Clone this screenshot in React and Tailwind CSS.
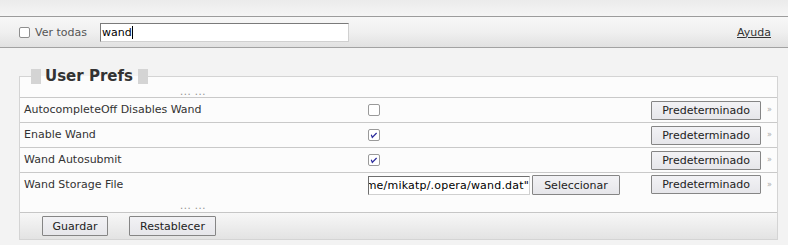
import React from "react";

function Check({ checked }) {
  return (
    <svg width="12" height="12" viewBox="0 0 12 12" className="block">
      <rect x="0.5" y="0.5" width="11" height="11" rx="1.5" fill="#ffffff" stroke="#9a9a9a" />
      {checked && (
        <path d="M3.3 5.8 L4.3 8.4 L8.6 4" fill="none" stroke="#2a2a9c" strokeWidth="1.2" />
      )}
    </svg>
  );
}

function Btn({ children, w, h = "h-[19px]" }) {
  return (
    <div
      className={`${w} ${h} flex items-center justify-center border border-[#858585] rounded-[1px] bg-gradient-to-b from-[#f2f2f5] to-[#e6e6ea] text-[#222] text-[11px] leading-none`}
    >
      {children}
    </div>
  );
}

function Right() {
  return (
    <div className="flex items-center pr-[5px]">
      <Btn w="w-[110px]">Predeterminado</Btn>
      <span className="ml-[6px] text-[8px] text-[#a8a8a8] leading-none">»</span>
    </div>
  );
}

function Row({ label, children, tall }) {
  return (
    <div className={`flex border-t border-[#c9c9c9] ${tall ? "h-[28px] items-start pt-[2px]" : "h-[25px] items-center"}`}>
      <div className={`w-[346px] pl-[4px] text-[#333] leading-[13px] self-start ${tall ? "pt-[3px]" : "pt-[5px]"}`}>
        {label}
      </div>
      <div className="flex-1 flex items-center pl-[2px]">{children}</div>
      <Right />
    </div>
  );
}

function Dots({ h }) {
  return (
    <div className={`flex ${h}`}>
      <div className="w-[346px] flex justify-center items-end text-[#909090] text-[10px] leading-[10px] tracking-[0.5px]">
        ... ...
      </div>
    </div>
  );
}

export default function App() {
  return (
    <div className="w-[788px] h-[245px] overflow-hidden bg-[#f3f3f3] font-['DejaVu_Sans',sans-serif] text-[11px]">
      <div className="h-[17px] bg-gradient-to-b from-[#ebebeb] to-[#f5f5f5] border-b border-[#9c9c9c]" />
      <div className="h-[31px] flex items-center pl-[19px] pr-[17px] border-b border-[#a2a2a2] bg-gradient-to-b from-[#f7f7f7] via-[#f0f0f0] to-[#e1e1e1]">
        <span className="w-[11px] h-[11px] border border-[#8e8e8e] rounded-[2px] bg-white" />
        <span className="ml-[5px] text-[#555] leading-none">Ver todas</span>
        <div className="ml-[13px] w-[249px] h-[19px] bg-white border border-t-[#7a7a7a] border-l-[#7a7a7a] border-r-[#d0d0d0] border-b-[#d0d0d0] flex items-center pl-[1px] text-[11px] text-black leading-none">
          wand
          <span className="w-[1px] h-[13px] bg-black" />
        </div>
        <a className="ml-auto text-[#333] underline leading-none">Ayuda</a>
      </div>

      <fieldset className="mt-[21px] ml-[19px] w-[759px] border border-[#d4d4d4] bg-[#fcfcfc]">
        <legend className="ml-[11px] flex items-center h-[15px]">
          <span className="w-[10px] h-[15px] bg-[#d4d4d4]" />
          <span className="pl-[4px] pr-[5px] text-[15px] font-bold leading-[15px] text-[#333]">User Prefs</span>
          <span className="w-[10px] h-[15px] bg-[#d4d4d4]" />
        </legend>
        <Dots h="h-[13px]" />
        <Row label="AutocompleteOff Disables Wand">
          <Check />
        </Row>
        <Row label="Enable Wand">
          <Check checked />
        </Row>
        <Row label="Wand Autosubmit">
          <Check checked />
        </Row>
        <Row label="Wand Storage File" tall>
          <div className="flex items-center">
            <div className="w-[162px] h-[19px] bg-white border border-t-[#6e6e6e] border-l-[#6e6e6e] border-r-[#d0d0d0] border-b-[#d0d0d0] flex justify-end items-center overflow-hidden whitespace-nowrap text-black leading-none tracking-[0.2px]">
              "/home/mikatp/.opera/wand.dat"
            </div>
            <div className="ml-[2px]">
              <Btn w="w-[88px]" h="h-[20px]">Seleccionar</Btn>
            </div>
          </div>
        </Row>
        <Dots h="h-[12px] pb-[1px]" />
        <div className="h-[27px] border-t border-[#c6c6c6] bg-gradient-to-b from-[#f7f7f7] to-[#e3e3e3] flex items-center pl-[22px] gap-[21px]">
          <Btn w="w-[66px]" h="h-[20px]">Guardar</Btn>
          <Btn w="w-[87px]" h="h-[20px]">Restablecer</Btn>
        </div>
      </fieldset>
    </div>
  );
}
